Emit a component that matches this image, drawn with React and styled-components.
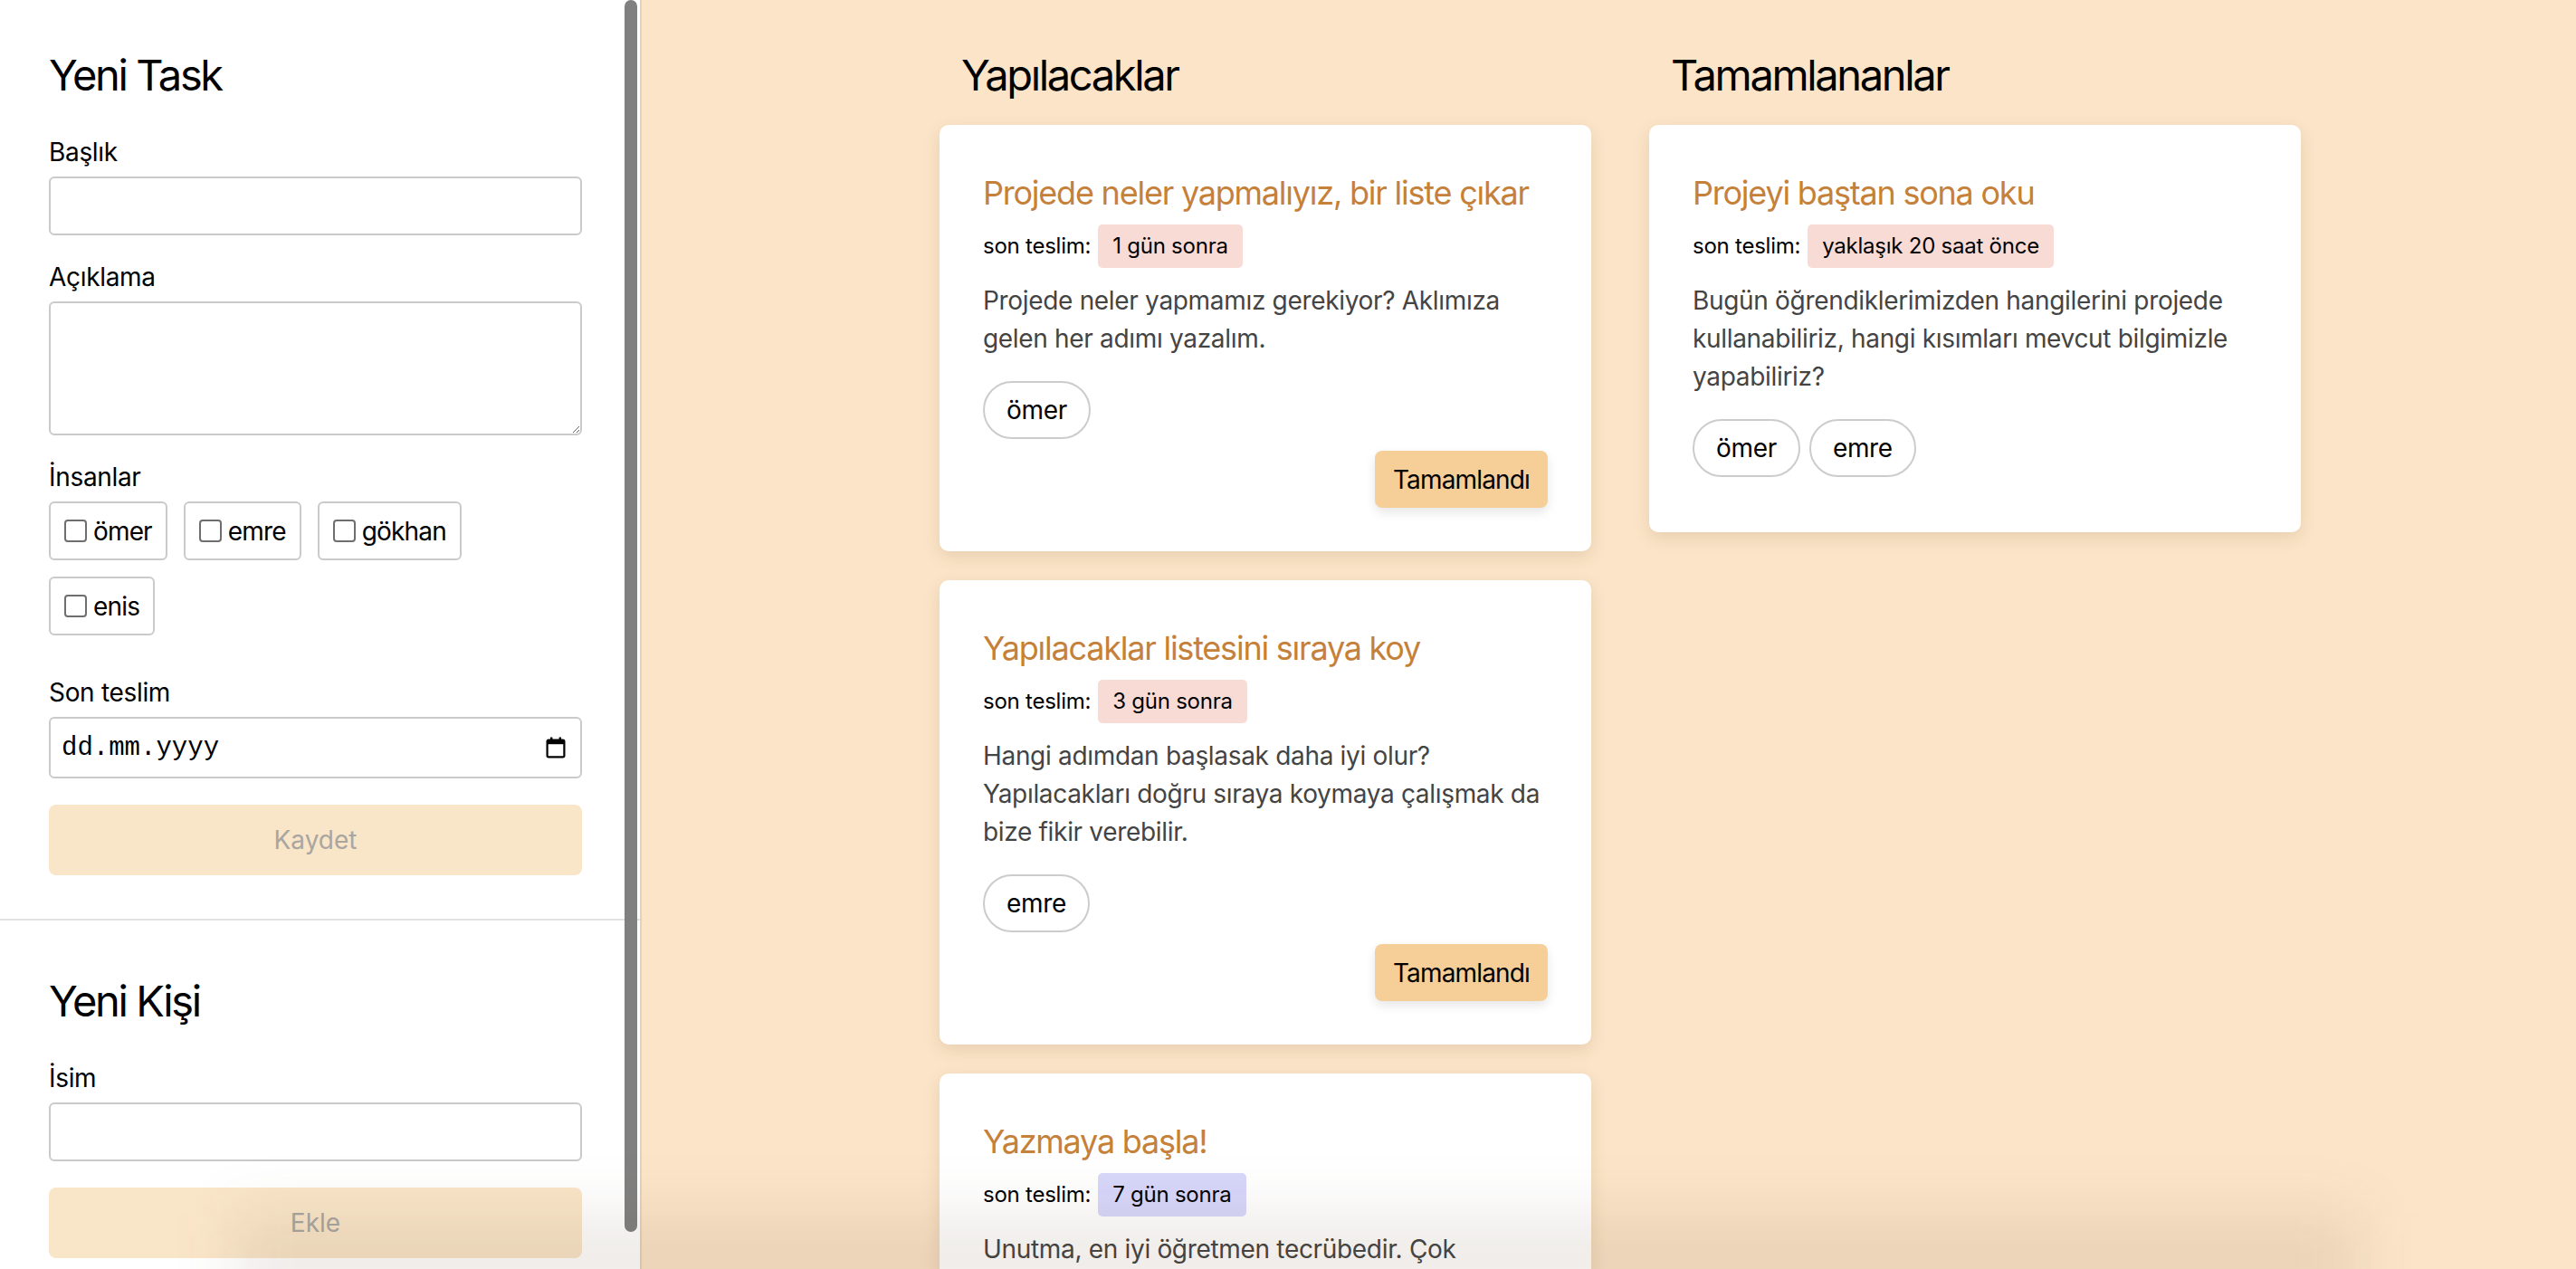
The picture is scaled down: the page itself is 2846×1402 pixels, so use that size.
import React from 'react';
import styled, { createGlobalStyle } from 'styled-components';

const GlobalStyle = createGlobalStyle`
  * { box-sizing: border-box; }
  html, body { margin: 0; padding: 0; height: 100%; }
  body {
    font-family: Inter, "Noto Sans", "Liberation Sans", sans-serif;
    letter-spacing: -0.02em;
    color: #000;
    overflow: hidden;
  }
`;

const Layout = styled.div`
  display: flex;
  height: 100vh;
  overflow: hidden;
`;

const Sidebar = styled.aside`
  position: relative;
  flex: 0 0 709px;
  background: #fff;
  border-right: 2px solid #ecd1ae;
  overflow: hidden;
`;

const ScrollThumb = styled.div`
  position: absolute;
  top: 0;
  right: 3px;
  width: 14px;
  height: 1361px;
  border-radius: 7px;
  background: #808080;
`;

const FormSection = styled.section`
  padding: ${p => p.$top}px 64px 48px 54px;
  & + & { border-top: 2px solid #e2e2e2; }
`;

const SectionTitle = styled.h2`
  margin: 0 0 39px;
  font-size: 47px;
  line-height: 58px;
  font-weight: 400;
  letter-spacing: -0.05em;
`;

const Field = styled.div`
  display: flex;
  flex-direction: column;
  margin-bottom: 29px;
`;

const Label = styled.label`
  font-size: 28px;
  line-height: 34px;
  margin-bottom: 10px;
`;

const TextInput = styled.input`
  height: 65px;
  border: 2px solid #cacaca;
  border-radius: 6px;
  padding: 0 12px;
  font: inherit;
  font-size: 28px;
  outline: none;
`;

const TextArea = styled.textarea`
  height: 148px;
  border: 2px solid #cacaca;
  border-radius: 6px;
  padding: 12px;
  font: inherit;
  font-size: 28px;
  resize: vertical;
  outline: none;
`;

const PeopleGrid = styled.div`
  display: flex;
  flex-wrap: wrap;
  gap: 18px;
  margin-bottom: 17px;
`;

const PersonOption = styled.label`
  display: inline-flex;
  align-items: center;
  gap: 7px;
  height: 65px;
  padding: 0 15px 0 15px;
  border: 2px solid #cacaca;
  border-radius: 6px;
  font-size: 28px;
  letter-spacing: -0.03em;
`;

const Checkbox = styled.input`
  appearance: none;
  width: 25px;
  height: 25px;
  margin: 0;
  border: 2px solid #6e6e6e;
  border-radius: 4px;
  background: #fff;
`;

const DateBox = styled.div`
  display: flex;
  align-items: center;
  height: 68px;
  border: 2px solid #cacaca;
  border-radius: 6px;
  padding: 0 16px 0 12px;
`;

const DateInput = styled.input`
  flex: 1;
  min-width: 0;
  border: none;
  outline: none;
  padding: 0;
  font-family: "Liberation Mono", "DejaVu Sans Mono", monospace;
  font-size: 29px;
  letter-spacing: 0;
  color: #000;
  &::placeholder { color: #000; }
`;

const SubmitButton = styled.button`
  display: block;
  width: 100%;
  height: 78px;
  margin-top: 4px;
  border: none;
  border-radius: 8px;
  background: #f9e5c8;
  color: #a9a6a1;
  font: inherit;
  font-size: 28px;
`;

const Main = styled.main`
  flex: 1;
  display: flex;
  justify-content: center;
  align-items: flex-start;
  gap: 64px;
  padding: 54px 24px 0 49px;
  background: #fbe4c8;
  overflow: hidden;
`;

const Column = styled.div`
  flex: 0 0 720px;
  display: flex;
  flex-direction: column;
`;

const ColumnTitle = styled.h2`
  margin: 0 0 26px;
  padding-left: 24px;
  font-size: 47px;
  line-height: 58px;
  font-weight: 400;
  letter-spacing: -0.05em;
`;

const CardList = styled.div`
  display: flex;
  flex-direction: column;
  gap: 32px;
`;

const Card = styled.div`
  background: #fff;
  border-radius: 10px;
  padding: 48px;
  box-shadow: 0 6px 18px rgba(120, 80, 30, 0.14);
`;

const TaskTitle = styled.h3`
  margin: 0 0 8px;
  font-size: 36px;
  line-height: 54px;
  font-weight: 400;
  letter-spacing: -0.034em;
  color: #c5803a;
`;

const Meta = styled.div`
  display: flex;
  align-items: center;
  gap: 8px;
  font-size: 24px;
  line-height: 30px;
  letter-spacing: -0.01em;
`;

const tones = {
  pink: '#f9dbd6',
  lavender: '#d7d7fb',
};

const DueBadge = styled.span`
  padding: 9px 16px;
  border-radius: 5px;
  background: ${p => tones[p.$tone]};
`;

const Description = styled.p`
  margin: 15px 0 26px;
  font-size: 28px;
  line-height: 42px;
  color: #444;
`;

const People = styled.div`
  display: flex;
  flex-wrap: wrap;
  gap: 10px;
  margin-bottom: 13px;
`;

const PersonTag = styled.span`
  display: inline-flex;
  align-items: center;
  height: 64px;
  padding: 0 24px;
  border: 2px solid #cccccc;
  border-radius: 32px;
  font-size: 28px;
`;

const ActionRow = styled.div`
  display: flex;
  justify-content: flex-end;
`;

const DoneButton = styled.button`
  height: 63px;
  padding: 0 20px;
  border: none;
  border-radius: 8px;
  background: #f6cf98;
  color: #000;
  font: inherit;
  font-size: 28px;
  letter-spacing: -0.03em;
  box-shadow: 0 5px 12px rgba(0, 0, 0, 0.1);
`;

const Shade = styled.div`
  position: fixed;
  left: 260px;
  right: 240px;
  bottom: -40px;
  height: 100px;
  background: rgba(90, 60, 30, 0.1);
  filter: blur(34px);
  pointer-events: none;
`;

const people = ['ömer', 'emre', 'gökhan', 'enis'];

const todo = [
  {
    id: 1,
    title: 'Projede neler yapmalıyız, bir liste çıkar',
    due: '1 gün sonra',
    tone: 'pink',
    text: 'Projede neler yapmamız gerekiyor? Aklımıza gelen her adımı yazalım.',
    people: ['ömer'],
  },
  {
    id: 2,
    title: 'Yapılacaklar listesini sıraya koy',
    due: '3 gün sonra',
    tone: 'pink',
    text: 'Hangi adımdan başlasak daha iyi olur? Yapılacakları doğru sıraya koymaya çalışmak da bize fikir verebilir.',
    people: ['emre'],
  },
  {
    id: 3,
    title: 'Yazmaya başla!',
    due: '7 gün sonra',
    tone: 'lavender',
    text: 'Unutma, en iyi öğretmen tecrübedir. Çok düşünmeden yazmaya başla, hatalar sana yol gösterecek.',
    people: ['gökhan', 'enis'],
  },
];

const done = [
  {
    id: 4,
    title: 'Projeyi baştan sona oku',
    due: 'yaklaşık 20 saat önce',
    tone: 'pink',
    text: 'Bugün öğrendiklerimizden hangilerini projede kullanabiliriz, hangi kısımları mevcut bilgimizle yapabiliriz?',
    people: ['ömer', 'emre'],
  },
];

function CalendarIcon() {
  return (
    <svg width="22" height="24" viewBox="0 0 22 24">
      <rect x="5" y="0.5" width="2.4" height="4" fill="#000" />
      <rect x="14.6" y="0.5" width="2.4" height="4" fill="#000" />
      <rect x="1.6" y="3.6" width="18.8" height="18.8" rx="1.6" fill="none" stroke="#000" strokeWidth="2.2" />
      <rect x="1.6" y="3.6" width="18.8" height="4.6" fill="#000" />
    </svg>
  );
}

function TaskCard({ task, completed }) {
  return (
    <Card>
      <TaskTitle>{task.title}</TaskTitle>
      <Meta>
        son teslim:
        <DueBadge $tone={task.tone}>{task.due}</DueBadge>
      </Meta>
      <Description>{task.text}</Description>
      <People>
        {task.people.map(p => <PersonTag key={p}>{p}</PersonTag>)}
      </People>
      {!completed && (
        <ActionRow>
          <DoneButton>Tamamlandı</DoneButton>
        </ActionRow>
      )}
    </Card>
  );
}

export default function App() {
  return (
    <>
      <GlobalStyle />
      <Layout>
        <Sidebar>
          <FormSection $top={54}>
            <SectionTitle>Yeni Task</SectionTitle>
            <Field>
              <Label>Başlık</Label>
              <TextInput type="text" />
            </Field>
            <Field>
              <Label>Açıklama</Label>
              <TextArea />
            </Field>
            <Field>
              <Label>İnsanlar</Label>
              <PeopleGrid>
                {people.map(p => (
                  <PersonOption key={p}>
                    <Checkbox type="checkbox" />
                    {p}
                  </PersonOption>
                ))}
              </PeopleGrid>
            </Field>
            <Field>
              <Label>Son teslim</Label>
              <DateBox>
                <DateInput type="text" placeholder="dd.mm.yyyy" />
                <CalendarIcon />
              </DateBox>
            </Field>
            <SubmitButton disabled>Kaydet</SubmitButton>
          </FormSection>
          <FormSection $top={60}>
            <SectionTitle>Yeni Kişi</SectionTitle>
            <Field>
              <Label>İsim</Label>
              <TextInput type="text" />
            </Field>
            <SubmitButton disabled>Ekle</SubmitButton>
          </FormSection>
          <ScrollThumb />
        </Sidebar>
        <Main>
          <Column>
            <ColumnTitle>Yapılacaklar</ColumnTitle>
            <CardList>
              {todo.map(t => <TaskCard key={t.id} task={t} />)}
            </CardList>
          </Column>
          <Column>
            <ColumnTitle>Tamamlananlar</ColumnTitle>
            <CardList>
              {done.map(t => <TaskCard key={t.id} task={t} completed />)}
            </CardList>
          </Column>
        </Main>
      </Layout>
      <Shade />
    </>
  );
}
